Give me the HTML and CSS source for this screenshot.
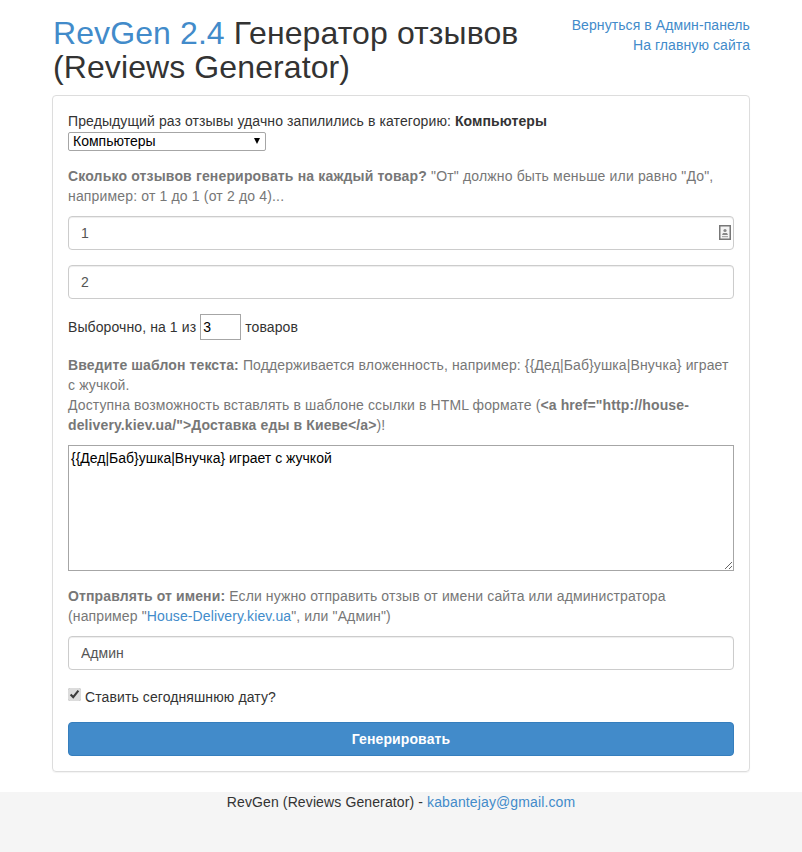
FILE: index.html
```html
<!DOCTYPE html>
<html lang="ru">
<head>
    <meta charset="UTF-8">
    <title>RevGen 2.4 Генератор отзывов</title>
    <link rel="stylesheet" href="styles.css">
</head>
<body>
    <div class="container">
        <div class="top">
            <h1><span class="brand">RevGen 2.4</span> Генератор отзывов (Reviews Generator)</h1>
            <div class="top-links">
                <a href="#">Вернуться в Админ-панель</a><br>
                <a href="#">На главную сайта</a>
            </div>
        </div>
        <form class="panel">
            <div class="group-first">
                Предыдущий раз отзывы удачно запилились в категорию: <b>Компьютеры</b>
                <div class="select-wrap">
                    <select class="cat-select">
                        <option>Компьютеры</option>
                    </select>
                </div>
            </div>
            <p class="hint hint-wide"><b>Сколько отзывов генерировать на каждый товар?</b> "От" должно быть меньше или равно "До", например: от 1 до 1 (от 2 до 4)...</p>
            <div class="field-wrap">
                <input class="field" type="text" value="1">
                <svg class="autofill-icon" width="12" height="15" viewBox="0 0 12 15">
                    <rect x="0.75" y="0.75" width="10.5" height="13.5" fill="#f4f4f4" stroke="#777" stroke-width="1.5"/>
                    <circle cx="6" cy="5.5" r="1.6" fill="#888"/>
                    <path d="M3 10 L4 8 H8 L9 10 Z" fill="#888"/>
                    <rect x="3" y="11" width="6" height="1.2" fill="#aaa"/>
                </svg>
            </div>
            <input class="field" type="text" value="2">
            <div class="sample">
                Выборочно, на 1 из <input class="small-input" type="text" value="3"> товаров
            </div>
            <p class="hint"><b>Введите шаблон текста:</b> Поддерживается вложенность, например: {{Дед|Баб}ушка|Внучка} играет с жучкой.<br>
            Доступна возможность вставлять в шаблоне ссылки в HTML формате (<b>&lt;a href="http://house-delivery.kiev.ua/"&gt;Доставка еды в Киеве&lt;/a&gt;</b>)!</p>
            <textarea class="template">{{Дед|Баб}ушка|Внучка} играет с жучкой</textarea>
            <p class="hint"><b>Отправлять от имени:</b> Если нужно отправить отзыв от имени сайта или администратора (например "<a href="#">House-Delivery.kiev.ua</a>", или "Админ")</p>
            <input class="field" type="text" value="Админ">
            <label class="check">
                <input type="checkbox" checked> Ставить сегодняшнюю дату?
            </label>
            <button type="button" class="btn">Генерировать</button>
        </form>
    </div>
    <footer>
        RevGen (Reviews Generator) - <a href="#">kabantejay@gmail.com</a>
    </footer>
</body>
</html>
```

FILE: styles.css
```css
* {
    box-sizing: border-box;
}
body {
    font-family: "Liberation Sans", Arial, sans-serif;
    font-size: 14px;
    line-height: 20px;
    color: #333;
    background-color: #fff;
    margin: 0;
}
a {
    color: #428bca;
    text-decoration: none;
}
.container {
    width: 698px;
    margin: 0 auto;
}
.top {
    display: flex;
    justify-content: space-between;
    height: 95px;
    padding-top: 15px;
}
h1 {
    font-size: 32px;
    font-weight: normal;
    line-height: 34px;
    letter-spacing: 0.1px;
    margin: 1px 0 0 1px;
    width: 490px;
}
.brand {
    color: #428bca;
}
.top-links {
    text-align: right;
    letter-spacing: 0.08px;
}
.panel {
    border: 1px solid #ddd;
    border-radius: 4px;
    box-shadow: 0 1px 1px rgba(0, 0, 0, 0.05);
    padding: 15px;
    height: 677px;
    letter-spacing: 0.1px;
}
.select-wrap {
    position: relative;
    width: 198px;
    margin-top: 1px;
}
.select-wrap::after {
    content: "";
    position: absolute;
    right: 6px;
    top: 6px;
    border-left: 3.5px solid transparent;
    border-right: 3.5px solid transparent;
    border-top: 6px solid #000;
}
.cat-select {
    appearance: none;
    width: 198px;
    height: 19px;
    font-family: "Liberation Sans", Arial, sans-serif;
    font-size: 14px;
    line-height: 17px;
    background: #fff;
    border: 1px solid #a6a6a6;
    border-radius: 2px;
    color: #000;
    padding: 0 4px;
    display: block;
}
.hint {
    color: #777;
    margin: 15px 0 10px;
    letter-spacing: 0.12px;
}
.hint-wide {
    letter-spacing: 0.16px;
}
.field-wrap {
    position: relative;
    margin-bottom: 15px;
}
.autofill-icon {
    position: absolute;
    right: 3px;
    top: 9px;
}
.field {
    display: block;
    width: 100%;
    height: 34px;
    padding: 6px 12px;
    font-family: "Liberation Sans", Arial, sans-serif;
    font-size: 14px;
    color: #555;
    background: #fff;
    border: 1px solid #ccc;
    border-radius: 4px;
    box-shadow: inset 0 1px 1px rgba(0, 0, 0, 0.075);
}
.sample {
    margin-top: 15px;
    height: 26px;
    line-height: 26px;
}
.small-input {
    width: 41px;
    height: 26px;
    padding: 1px 2px;
    font-family: "Liberation Sans", Arial, sans-serif;
    font-size: 14px;
    color: #000;
    border: 1px solid #a6a6a6;
    vertical-align: top;
}
.template {
    display: block;
    width: 100%;
    height: 126px;
    padding: 2px;
    font-family: "Liberation Sans", Arial, sans-serif;
    font-size: 14px;
    line-height: 20px;
    color: #000;
    border: 1px solid #a6a6a6;
}
.check {
    display: block;
    margin-top: 17px;
    height: 20px;
}
.check input {
    margin: 0;
    width: 13px;
    height: 13px;
    vertical-align: 1px;
    accent-color: #dcdcdc;
}
.btn {
    display: block;
    width: 100%;
    height: 34px;
    margin-top: 15px;
    font-family: "Liberation Sans", Arial, sans-serif;
    font-size: 14px;
    font-weight: bold;
    letter-spacing: 0.1px;
    color: #fff;
    background: #428bca;
    border: 1px solid #357ebd;
    border-radius: 4px;
}
footer {
    margin-top: 20px;
    height: 60px;
    background: #f5f5f5;
    text-align: center;
    letter-spacing: 0.12px;
}
```
